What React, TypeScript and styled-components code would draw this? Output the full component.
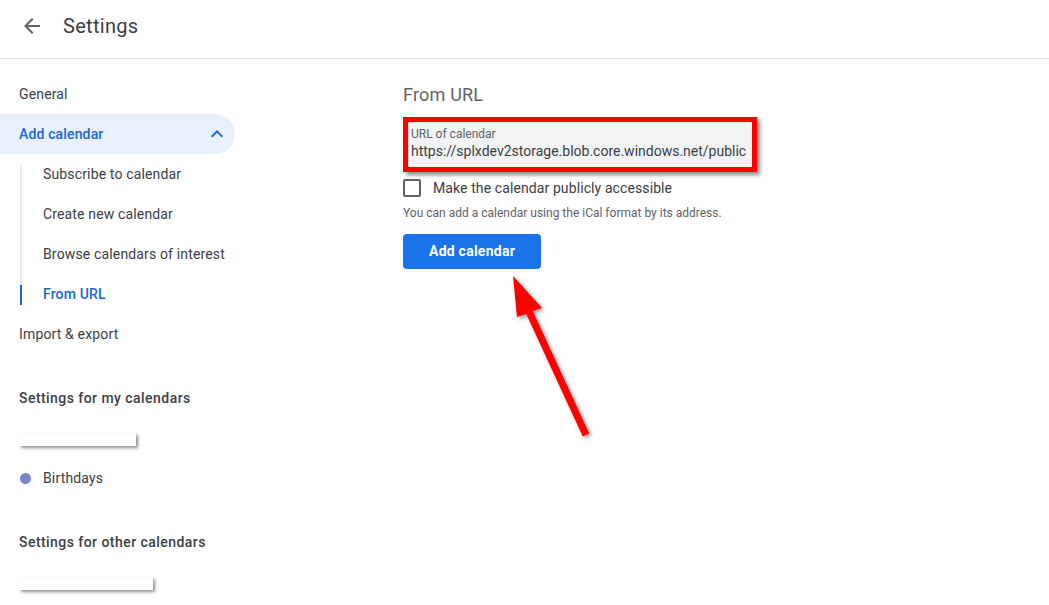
import styled, { createGlobalStyle } from 'styled-components'

const GlobalStyle = createGlobalStyle`
  html, body {
    margin: 0;
    padding: 0;
    background: #ffffff;
  }
  body {
    font-family: Roboto, "Liberation Sans", Arial, sans-serif;
    color: #3c4043;
    -webkit-font-smoothing: antialiased;
  }
`

const Page = styled.div`
  position: relative;
  width: 1049px;
  height: 605px;
  overflow: hidden;
  display: flex;
  flex-direction: column;
`

const Header = styled.header`
  height: 58px;
  border-bottom: 1px solid #dadce0;
  display: flex;
  align-items: center;
  padding-left: 20px;
  gap: 19px;
  flex-shrink: 0;
`

const IconButton = styled.span`
  width: 24px;
  height: 24px;
  display: flex;
  color: #5f6368;
  margin-top: -6px;
`

const Title = styled.h1`
  margin: -6px 0 0;
  font-size: 20px;
  font-weight: 400;
  color: #3c4043;
  letter-spacing: 0.3px;
`

const Body = styled.div`
  display: flex;
  flex: 1;
`

const Sidebar = styled.nav`
  width: 256px;
  padding-top: 15px;
  display: flex;
  flex-direction: column;
`

const NavItem = styled.div<{ $active?: boolean; $indent?: boolean }>`
  height: 40px;
  display: flex;
  align-items: center;
  justify-content: space-between;
  padding-left: ${(p) => (p.$indent ? '43px' : '19px')};
  padding-right: 6px;
  margin-right: 21px;
  font-size: 14px;
  letter-spacing: 0.15px;
  font-weight: ${(p) => (p.$active ? 500 : 400)};
  color: ${(p) => (p.$active ? '#1967d2' : '#3c4043')};
  background: ${(p) => (p.$active && !p.$indent ? '#e8f0fe' : 'transparent')};
  border-radius: 0 20px 20px 0;
  position: relative;
`

const SubList = styled.div`
  position: relative;
  display: flex;
  flex-direction: column;
  &::before {
    content: '';
    position: absolute;
    left: 20px;
    top: 11px;
    bottom: 9px;
    width: 2px;
    background: #e8eaed;
  }
`

const ActiveBar = styled.span`
  position: absolute;
  left: 20px;
  top: 11px;
  width: 2px;
  height: 20px;
  background: #1967d2;
`

const SectionTitle = styled.div`
  height: 40px;
  margin-top: 24px;
  display: flex;
  align-items: center;
  padding-left: 19px;
  font-size: 14px;
  font-weight: 500;
  letter-spacing: 0.45px;
  color: #3c4043;
`

const RedactedRow = styled.div`
  height: 40px;
  display: flex;
  align-items: center;
  padding-left: 19px;
`

const Redacted = styled.span<{ $w: number }>`
  display: block;
  width: ${(p) => p.$w}px;
  height: 13px;
  margin-top: 3px;
  background: #ffffff;
  box-shadow: 2px 2px 3px rgba(0, 0, 0, 0.45);
`

const CalendarRow = styled.div`
  height: 40px;
  display: flex;
  align-items: center;
  padding-left: 20px;
  gap: 12px;
  font-size: 14px;
  letter-spacing: 0.15px;
  color: #3c4043;
`

const Dot = styled.span<{ $color: string }>`
  width: 11px;
  height: 11px;
  border-radius: 50%;
  background: ${(p) => p.$color};
`

const Main = styled.main`
  flex: 1;
  padding-left: 147px;
  padding-top: 24px;
  display: flex;
  flex-direction: column;
  align-items: flex-start;
`

const SectionHeading = styled.h2`
  margin: 0;
  font-size: 18px;
  line-height: 24px;
  font-weight: 400;
  letter-spacing: 0.2px;
  color: #5f6368;
`

const Highlight = styled.div`
  margin-top: 10px;
  width: 344px;
  border: 5px solid #ff0000;
  box-shadow: 3px 3px 4px rgba(0, 0, 0, 0.45);
`

const Field = styled.div`
  height: 45px;
  box-sizing: border-box;
  background: #f1f3f4;
  border-top: 1px solid #dadce0;
  border-left: 1px solid #dadce0;
  padding: 4px 0 0 2px;
  overflow: hidden;
  white-space: nowrap;
`

const FieldLabel = styled.div`
  font-size: 12px;
  line-height: 14px;
  color: #5f6368;
`

const FieldValue = styled.div`
  font-size: 14px;
  line-height: 20px;
  color: #3c4043;
`

const CheckRow = styled.label`
  margin-top: 7px;
  display: flex;
  align-items: center;
  gap: 12px;
  font-size: 14px;
  letter-spacing: 0.1px;
  color: #3c4043;
`

const Checkbox = styled.span`
  width: 18px;
  height: 18px;
  box-sizing: border-box;
  border: 2px solid #5f6368;
  border-radius: 2px;
`

const Help = styled.p`
  margin: 8px 0 0;
  font-size: 12px;
  line-height: 16px;
  color: #5f6368;
`

const PrimaryButton = styled.button`
  margin-top: 13px;
  width: 138px;
  height: 35px;
  border: none;
  border-radius: 4px;
  background: #1a73e8;
  color: #ffffff;
  font-family: Roboto, "Liberation Sans", Arial, sans-serif;
  font-size: 14px;
  font-weight: 700;
  letter-spacing: 0.25px;
  padding: 0 0 2px;
`

const Arrow = styled.svg`
  position: absolute;
  left: 500px;
  top: 265px;
  width: 100px;
  height: 180px;
  filter: drop-shadow(2px 2px 2px rgba(0, 0, 0, 0.4));
`

export default function App() {
  return (
    <Page>
      <GlobalStyle />
      <Header>
        <IconButton>
          <svg width="24" height="24" viewBox="0 0 24 24" fill="currentColor">
            <path d="M20 11H7.83l5.59-5.59L12 4l-8 8 8 8 1.41-1.41L7.83 13H20v-2z" />
          </svg>
        </IconButton>
        <Title>Settings</Title>
      </Header>
      <Body>
        <Sidebar>
          <NavItem>General</NavItem>
          <NavItem $active>
            Add calendar
            <svg width="24" height="24" viewBox="0 0 24 24" fill="#1967d2">
              <path d="M12 8l-6 6 1.41 1.41L12 10.83l4.59 4.58L18 14z" />
            </svg>
          </NavItem>
          <SubList>
            <NavItem $indent>Subscribe to calendar</NavItem>
            <NavItem $indent>Create new calendar</NavItem>
            <NavItem $indent>Browse calendars of interest</NavItem>
            <NavItem $indent $active>
              <ActiveBar />
              From URL
            </NavItem>
          </SubList>
          <NavItem>Import &amp; export</NavItem>
          <SectionTitle>Settings for my calendars</SectionTitle>
          <RedactedRow>
            <Redacted $w={117} />
          </RedactedRow>
          <CalendarRow>
            <Dot $color="#7986cb" />
            Birthdays
          </CalendarRow>
          <SectionTitle>Settings for other calendars</SectionTitle>
          <RedactedRow>
            <Redacted $w={134} />
          </RedactedRow>
        </Sidebar>
        <Main>
          <SectionHeading>From URL</SectionHeading>
          <Highlight>
            <Field>
              <FieldLabel>URL of calendar</FieldLabel>
              <FieldValue>https://splxdev2storage.blob.core.windows.net/public</FieldValue>
            </Field>
          </Highlight>
          <CheckRow>
            <Checkbox />
            Make the calendar publicly accessible
          </CheckRow>
          <Help>You can add a calendar using the iCal format by its address.</Help>
          <PrimaryButton>Add calendar</PrimaryButton>
        </Main>
      </Body>
      <Arrow viewBox="0 0 100 180">
        <polygon
          fill="#ff0000"
          points="13,11 42,43 32.7,46 89.2,168.5 82.8,171.5 26.3,49 17,52"
        />
      </Arrow>
    </Page>
  )
}
